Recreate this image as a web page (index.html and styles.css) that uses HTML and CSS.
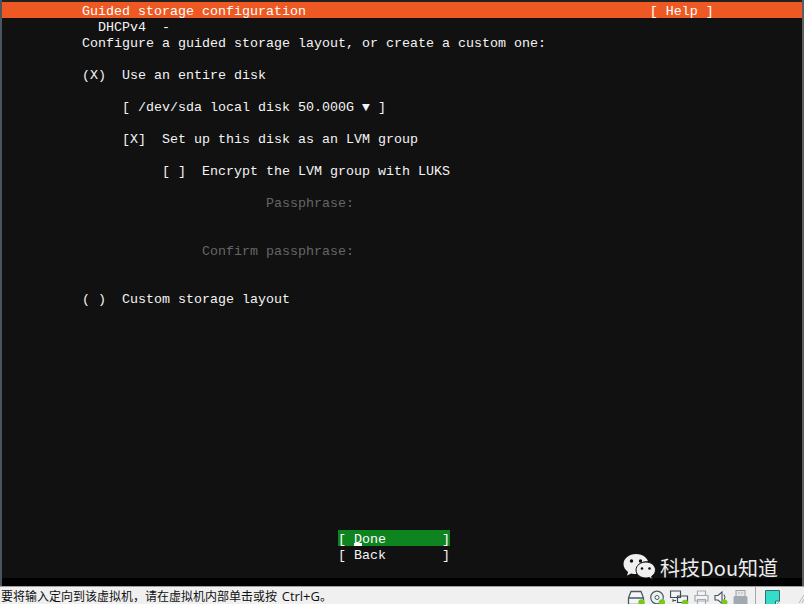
FILE: index.html
```html
<!DOCTYPE html>
<html lang="zh">
<head>
<meta charset="utf-8">
<title>Guided storage configuration</title>
<link rel="stylesheet" href="styles.css">
</head>
<body>
<div class="vm">
  <main class="screen">
    <div class="row title">          Guided storage configuration                                           [ Help ]</div>
    <div class="row">            DHCPv4  -</div>
    <div class="row">          Configure a guided storage layout, or create a custom one:</div>
    <div class="row"></div>
    <div class="row">          (X)  Use an entire disk</div>
    <div class="row"></div>
    <div class="row">               [ /dev/sda local disk 50.000G <span class="arrow">▼</span> ]</div>
    <div class="row"></div>
    <div class="row">               [X]  Set up this disk as an LVM group</div>
    <div class="row"></div>
    <div class="row">                    [ ]  Encrypt the LVM group with LUKS</div>
    <div class="row"></div>
    <div class="row dim">                                 Passphrase:</div>
    <div class="row"></div>
    <div class="row"></div>
    <div class="row dim">                         Confirm passphrase:</div>
    <div class="row"></div>
    <div class="row"></div>
    <div class="row">          ( )  Custom storage layout</div>
    <div class="buttons">
      <div class="row focus">[ <span class="hot">D</span>one       ]</div>
      <div class="row">[ Back       ]</div>
    </div>
  </main>
  <div class="letterbox"></div>
  <footer class="status">
    <span class="hint">要将输入定向到该虚拟机，请在虚拟机内部单击或按 <span class="latin">Ctrl+G</span>。</span>
    <div class="tray">
      <svg class="ico w18" viewBox="0 0 18 16"><path d="M1.500 8 4 1.500h10L16.500 8v6.500h-15z M1.500 8h15" fill="#f4f6f7" stroke="#4a5a66" stroke-width="1.300"/><circle cx="14.500" cy="12.500" r="3.200" fill="#7ac81e"/></svg>
      <svg class="ico w15" viewBox="0 0 15 16"><circle cx="7" cy="7.500" r="6.300" fill="#eef1f2" stroke="#4a5a66" stroke-width="1.200"/><circle cx="7" cy="7.500" r="2" fill="#fff" stroke="#4a5a66"/><circle cx="12" cy="12.500" r="3.200" fill="#7ac81e"/></svg>
      <svg class="ico w19" viewBox="0 0 19 16"><path d="M.5 1h10v6.500H.5z M7.500 6h10v6.500h-10z" fill="#f2f5f6" stroke="#3e4c58" stroke-width="1.200"/><path d="M3 10.500h3M3 9v3" stroke="#3e4c58" fill="none"/><circle cx="15" cy="13" r="3.200" fill="#7ac81e"/></svg>
      <svg class="ico w15" viewBox="0 0 15 16"><path d="M3.500 5V1h8v4M1 5.500h13V11H1z M3.500 9.500h8V15h-8z" fill="#f3f4f5" stroke="#a3abb1" stroke-width="1.200"/></svg>
      <svg class="ico w14" viewBox="0 0 14 16"><path d="M1 5.500h3L8 2v11.500L4 10H1z" fill="#f2f4f5" stroke="#45535f" stroke-width="1.100"/><path d="M10 4.500q2 3 0 5.500" fill="none" stroke="#45535f"/><circle cx="10.500" cy="12.500" r="3" fill="#7ac81e"/></svg>
      <svg class="ico w15" viewBox="0 0 15 16"><rect x="3" y="0.500" width="9" height="6" fill="#e4e6e8" stroke="#9aa2a9"/><rect x="0.500" y="6" width="14" height="10" rx="1.500" fill="#a2a9b0"/><path d="M5.500 3h1M8.500 3h1" stroke="#858d94"/></svg>
      <span class="sep"></span>
      <svg class="ico w15" viewBox="0 0 15 16"><path d="M.5.500h14V11l-4 4.500H.5z" fill="#35dcc8" stroke="#2f6f74"/><path d="M14.500 11h-4v4.500" fill="#d9f5f0" stroke="#2f6f74"/></svg>
      <svg class="grip" viewBox="0 0 8 13"><path d="M8 4 3 12M8 8l-2 4" stroke="#b5b9bd" fill="none"/></svg>
    </div>
  </footer>
  <div class="mark">
    <svg class="wechat" viewBox="0 0 33 29"><path d="M13 1C6 1 .5 5.500.5 11c0 3.200 1.800 6 4.600 8l-1.100 3.600 4.200-2.200c1.600.5 3.100.7 4.800.7h.8c-.5-1.300-.7-2.500-.7-3.600 0-5.200 5-9.300 11-9.300h.9C23.800 4.200 18.900 1 13 1z" fill="#f0f0f0"/><path d="M32.500 17c0-4.500-4.400-8-9.700-8S13 12.500 13 17s4.400 8 9.800 8c1.200 0 2.300-.2 3.400-.5l3.300 1.900-.9-3c2.400-1.600 3.900-3.900 3.900-6.400z" fill="#f0f0f0" stroke="#111" stroke-width="1"/><circle cx="8.500" cy="8" r="1.700" fill="#111"/><circle cx="17.500" cy="8" r="1.700" fill="#111"/><circle cx="19" cy="15.500" r="1.300" fill="#111"/><circle cx="26.500" cy="15.500" r="1.300" fill="#111"/></svg>
    <span class="mark-text">科技Dou知道</span>
  </div>
</div>
</body>
</html>
```

FILE: styles.css
```css
html, body {
  margin: 0;
  padding: 0;
  background: #111;
}
.vm {
  position: relative;
  display: flex;
  flex-direction: column;
  width: 804px;
  height: 604px;
  overflow: hidden;
}
.screen {
  flex: 1;
  min-height: 0;
  box-sizing: border-box;
  padding-top: 2px;
  background: #111;
  border-left: 2px solid #4a5560;
  border-right: 2px solid #5a5f64;
  box-shadow: inset 0 2px 0 #222;
  color: #f4f4f4;
  font-family: "Liberation Mono", monospace;
  font-size: 13.34px;
}
.row {
  height: 16px;
  line-height: 19px;
  white-space: pre;
}
.title {
  background: #ee5822;
  color: #fff;
}
.dim {
  color: #666;
}
.arrow {
  display: inline-block;
  width: 8px;
  font-size: 13px;
  line-height: 1;
  text-align: center;
}
.buttons {
  margin-top: 224px;
  margin-left: 336px;
  width: 112px;
}
.focus {
  background: #0e8420;
  color: #fff;
}
.hot {
  display: inline-block;
  height: 16px;
  vertical-align: top;
  box-shadow: inset 0 -3px 0 #fff;
}
.letterbox {
  height: 8px;
  background: #000;
  border-left: 2px solid #4a5560;
  border-right: 2px solid #5a5f64;
}
.status {
  display: flex;
  align-items: flex-start;
  justify-content: space-between;
  height: 17px;
  background: #f0f0f0;
  border-top: 1px solid #a0a0a0;
  overflow: hidden;
}
.hint {
  padding-left: 1px;
  color: #111;
  font-family: "Noto Sans CJK SC", sans-serif;
  font-size: 12px;
  line-height: 17px;
  white-space: nowrap;
}
.latin {
  font-family: "Open Sans", "Noto Sans", sans-serif;
  font-size: 13px;
  margin-left: 2px;
}
.tray {
  display: flex;
  align-items: flex-start;
  gap: 5px;
  padding-top: 3px;
}
.ico {
  display: block;
  height: 16px;
  flex: none;
}
.w14 { width: 14px; }
.w15 { width: 15px; }
.w18 { width: 18px; }
.w19 { width: 19px; }
.sep {
  width: 1px;
  height: 17px;
  margin: -3px 4px 0 2px;
  background: #a8a8a8;
}
.grip {
  width: 8px;
  height: 13px;
  margin: 1px 0 0 11px;
}
.mark {
  position: absolute;
  left: 623px;
  top: 553px;
  display: flex;
  align-items: center;
  gap: 4px;
  color: #ececec;
}
.wechat {
  display: block;
  width: 33px;
  height: 29px;
}
.mark-text {
  font-family: "Noto Sans CJK SC", sans-serif;
  font-size: 20px;
  line-height: 29px;
  white-space: nowrap;
}
```
